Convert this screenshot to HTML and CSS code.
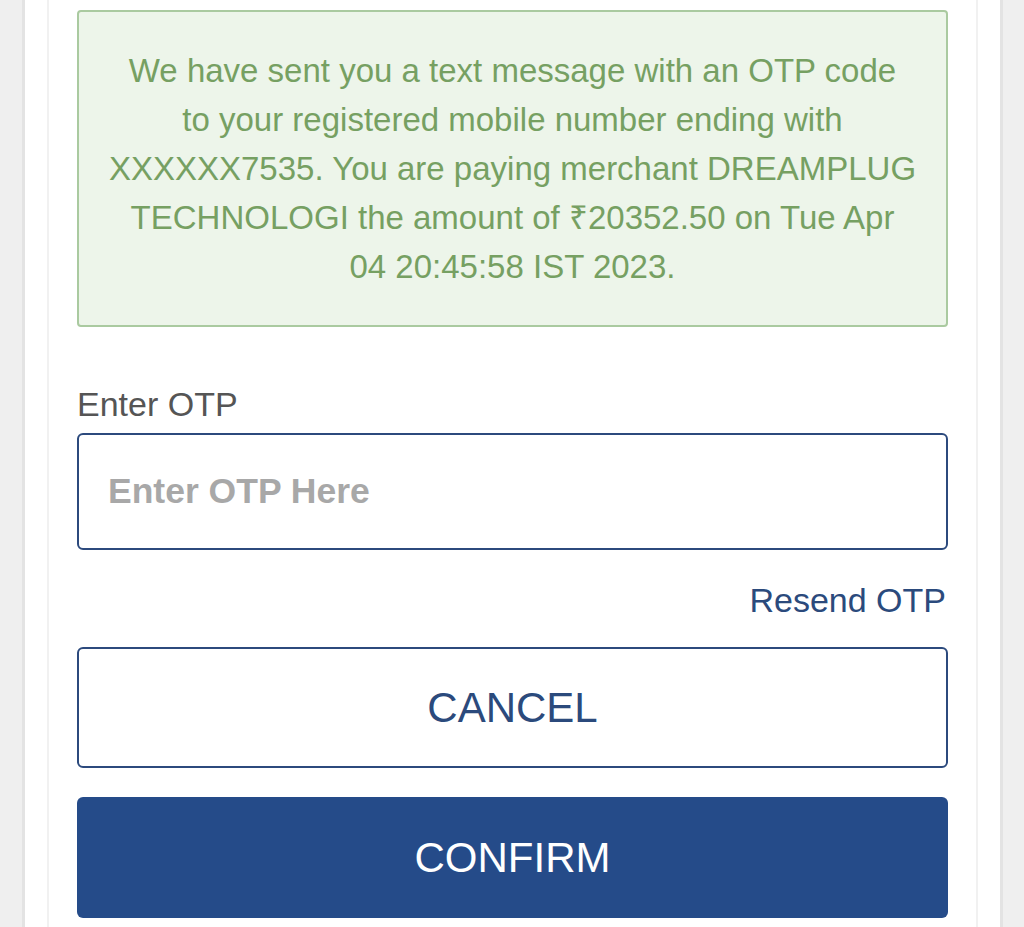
FILE: index.html
```html
<!DOCTYPE html>
<html>
<head>
<meta charset="utf-8">
<link rel="stylesheet" href="styles.css">
</head>
<body>
<div class="outer">
  <div class="inner">
    <div class="notice">We have sent you a text message with an OTP code<br>to your registered mobile number ending with<br>XXXXXX7535. You are paying merchant DREAMPLUG<br>TECHNOLOGI the amount of ₹20352.50 on Tue Apr<br>04 20:45:58 IST 2023.</div>
    <label class="label" for="otp">Enter OTP</label>
    <input class="otp-input" id="otp" type="text" placeholder="Enter OTP Here">
    <div class="resend-row"><a class="resend" href="#">Resend OTP</a></div>
    <button class="btn btn-cancel">CANCEL</button>
    <button class="btn btn-confirm">CONFIRM</button>
  </div>
</div>
</body>
</html>
```
FILE: styles.css
```css
html, body {
  margin: 0;
  padding: 0;
  background: #efefef;
  font-family: "Liberation Sans", Arial, sans-serif;
  height: 927px;
  overflow: hidden;
}
.outer {
  margin: 0 21px 0 22px;
  background: #ffffff;
  border-left: 3px solid #e3e3e3;
  border-right: 3px solid #e3e3e3;
  padding: 0 22px;
  min-height: 927px;
}
.inner {
  border-left: 2px solid #f1f1f1;
  border-right: 2px solid #f1f1f1;
  padding: 10px 28px 0 28px;
  min-height: 927px;
  display: flex;
  flex-direction: column;
}
.notice {
  background: #edf5ea;
  border: 2px solid #aacaa0;
  border-radius: 4px;
  color: #76a062;
  font-size: 33px;
  line-height: 49px;
  text-align: center;
  padding: 34px 10px 34px 10px;
  white-space: nowrap;
}
.label {
  margin-top: 57px;
  font-size: 34px;
  line-height: 40px;
  color: #555555;
}
.otp-input {
  margin-top: 9px;
  height: 117px;
  box-sizing: border-box;
  border: 2px solid #2c4a7d;
  border-radius: 6px;
  padding: 0 29px;
  font-family: "Liberation Sans", Arial, sans-serif;
  font-size: 35.5px;
  font-weight: bold;
  color: #333;
  outline: none;
}
.otp-input::placeholder {
  color: #a8a8a8;
}
.resend-row {
  margin-top: 30px;
  display: flex;
  justify-content: flex-end;
  line-height: 40px;
}
.resend {
  font-size: 34px;
  color: #2b4a7c;
  text-decoration: none;
  margin-right: 2px;
}
.btn {
  height: 121px;
  box-sizing: border-box;
  border-radius: 6px;
  font-family: "Liberation Sans", Arial, sans-serif;
  font-size: 42px;
  cursor: pointer;
}
.btn-cancel {
  margin-top: 27px;
  background: #ffffff;
  border: 2px solid #2c4a7d;
  color: #2b4a7c;
}
.btn-confirm {
  margin-top: 29px;
  background: #254b89;
  border: none;
  color: #ffffff;
}
```
